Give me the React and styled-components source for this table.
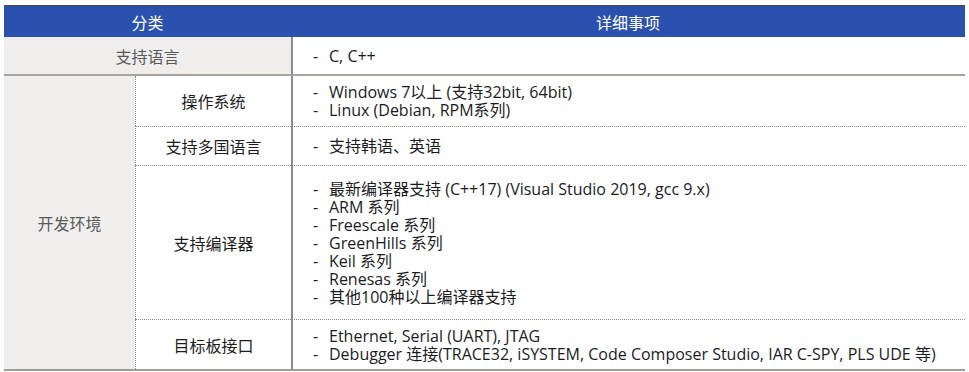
import React from 'react';
import styled, { createGlobalStyle } from 'styled-components';

const GlobalStyle = createGlobalStyle`
  body {
    margin: 0;
    background: #ffffff;
    font-family: "Open Sans", "Noto Sans CJK SC", sans-serif;
  }
`;

const Table = styled.div`
  display: grid;
  grid-template-columns: 131px 156px 674px;
  grid-template-rows: 31px 39px 50px 39px 154px 50px;
  margin: 5px 0 0 4px;
  width: 961px;
  border-top: 1px solid #4a4a4a;
  border-bottom: 2px solid #a19d99;
`;

const HeadCell = styled.div`
  grid-column: ${(p) => p.$span};
  display: flex;
  align-items: center;
  justify-content: center;
  background: #2a51ad;
  color: #ffffff;
  font-size: 16px;
  font-family: "Noto Sans CJK SC", sans-serif;
`;

const GroupCell = styled.div`
  grid-column: ${(p) => p.$col};
  grid-row: ${(p) => p.$row};
  display: flex;
  align-items: center;
  justify-content: center;
  background: #efeeec;
  color: #5a5a5a;
  font-size: 16px;
  font-family: "Noto Sans CJK SC", sans-serif;
  border-bottom: ${(p) => (p.$underline ? '2px solid #a8a4a0' : 'none')};
`;

const LabelCell = styled.div`
  grid-column: 2;
  display: flex;
  align-items: center;
  justify-content: center;
  color: #1c1c1c;
  font-size: 16px;
  font-family: "Noto Sans CJK SC", sans-serif;
  border-left: 1px dotted #8a8a8a;
  border-top: ${(p) => (p.$first ? 'none' : '1px dotted #8a8a8a')};
`;

const DetailCell = styled.div`
  grid-column: 3;
  display: flex;
  flex-direction: column;
  justify-content: center;
  padding-left: 20px;
  border-left: 2px solid #8e8a86;
  border-top: ${(p) => (p.$dotted ? '1px dotted #8a8a8a' : 'none')};
  border-bottom: ${(p) => (p.$underline ? '2px solid #a8a4a0' : 'none')};
`;

const Item = styled.div`
  display: flex;
  font-size: 16px;
  line-height: 18px;
  color: #1b1b24;
  white-space: nowrap;
`;

const Dash = styled.span`
  width: 16px;
  flex: none;
`;

const Bullet = ({ children }) => (
  <Item>
    <Dash>-</Dash>
    <span>{children}</span>
  </Item>
);

const rows = [
  { label: '操作系统', items: ['Windows 7以上 (支持32bit, 64bit)', 'Linux (Debian, RPM系列)'] },
  { label: '支持多国语言', items: ['支持韩语、英语'] },
  {
    label: '支持编译器',
    items: [
      '最新编译器支持 (C++17) (Visual Studio 2019, gcc 9.x)',
      'ARM 系列',
      'Freescale 系列',
      'GreenHills 系列',
      'Keil 系列',
      'Renesas 系列',
      '其他100种以上编译器支持',
    ],
  },
  {
    label: '目标板接口',
    items: [
      'Ethernet, Serial (UART), JTAG',
      'Debugger 连接(TRACE32, iSYSTEM, Code Composer Studio, IAR C-SPY, PLS UDE 等)',
    ],
  },
];

export default function App() {
  return (
    <>
      <GlobalStyle />
      <Table>
        <HeadCell $span="1 / 3">分类</HeadCell>
        <HeadCell $span="3">详细事项</HeadCell>

        <GroupCell $col="1 / 3" $row="2" $underline>支持语言</GroupCell>
        <DetailCell $underline>
          <Bullet>C, C++</Bullet>
        </DetailCell>

        <GroupCell $col="1" $row="3 / 7">开发环境</GroupCell>
        {rows.map((r, i) => (
          <React.Fragment key={r.label}>
            <LabelCell $first={i === 0}>{r.label}</LabelCell>
            <DetailCell $dotted={i !== 0}>
              {r.items.map((t) => (
                <Bullet key={t}>{t}</Bullet>
              ))}
            </DetailCell>
          </React.Fragment>
        ))}
      </Table>
    </>
  );
}
